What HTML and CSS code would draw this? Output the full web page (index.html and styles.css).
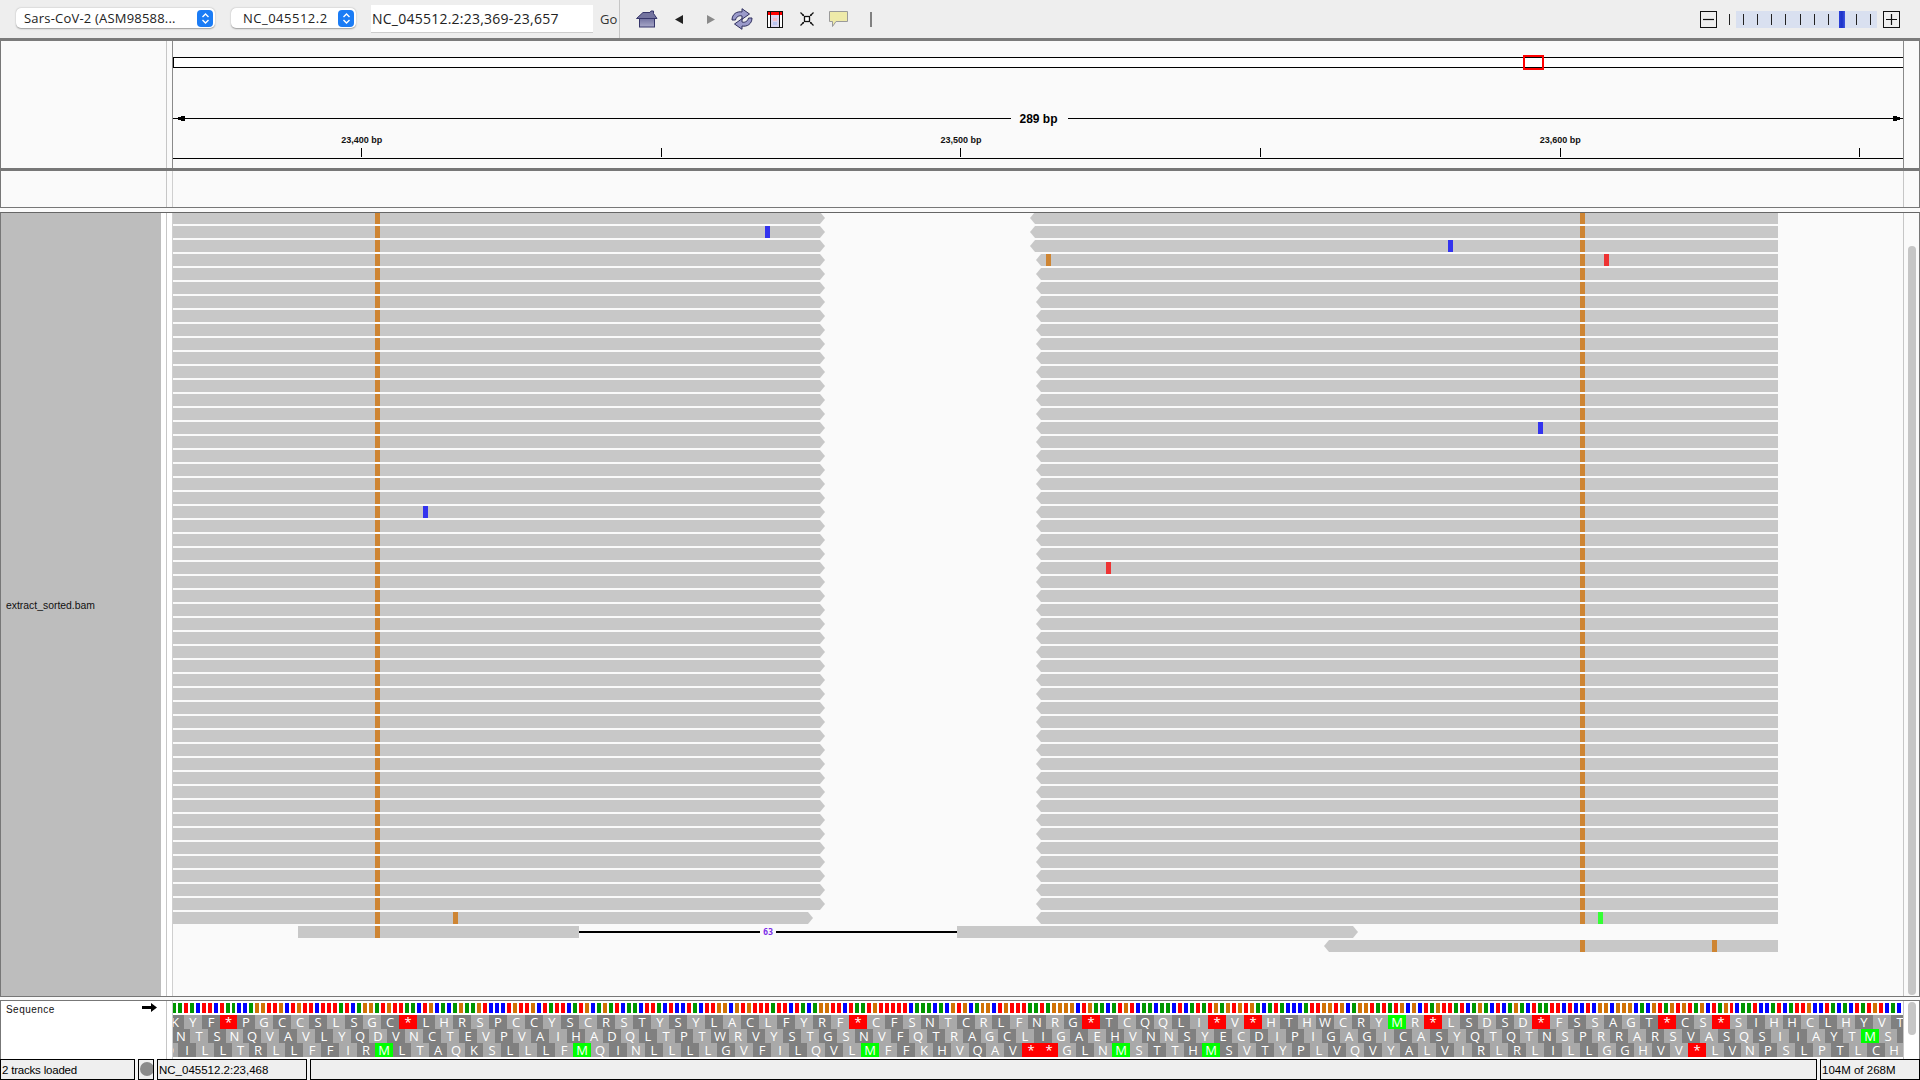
FILE: index.html
```html
<!DOCTYPE html>
<html lang="en">
<head>
<meta charset="utf-8">
<title>IGV</title>
<link rel="stylesheet" href="styles.css">
</head>
<body>
<header class="toolbar">
  <div class="select genome"><span class="select-text">Sars-CoV-2 (ASM98588...</span><span class="stepper"><svg width="9" height="13" viewBox="0 0 9 13"><path d="M1.5 5 4.5 2 7.5 5M1.5 8 4.5 11 7.5 8" fill="none" stroke="#fff" stroke-width="1.4"/></svg></span></div>
  <div class="select chrom"><span class="select-text">NC_045512.2</span><span class="stepper"><svg width="9" height="13" viewBox="0 0 9 13"><path d="M1.5 5 4.5 2 7.5 5M1.5 8 4.5 11 7.5 8" fill="none" stroke="#fff" stroke-width="1.4"/></svg></span></div>
  <div class="locus">NC_045512.2:23,369-23,657</div>
  <div class="go">Go</div>
  <div class="tools">
    <svg class="ic-home" width="22" height="18" viewBox="0 0 22 18"><defs><linearGradient id="hg" x1="0" y1="0" x2="0" y2="1"><stop offset="0" stop-color="#6f6f9e"/><stop offset="1" stop-color="#a9a9c9"/></linearGradient></defs><rect x="3.5" y="8" width="15" height="9" fill="url(#hg)" stroke="#35356a"/><path d="M.5 8.5 7 2.5H14L15 1H17.5V3.5L21 8.5Z" fill="#73739f" stroke="#35356a"/></svg>
    <svg class="ic-back" width="8" height="9" viewBox="0 0 8 9"><path d="M8 0V9L0 4.5Z" fill="#222"/></svg>
    <svg class="ic-fwd" width="8" height="9" viewBox="0 0 8 9"><path d="M0 0V9L8 4.5Z" fill="#8a8a8a"/></svg>
    <svg class="ic-refresh" width="22" height="22" viewBox="0 0 22 22"><path d="M1 12C1 6 6 3 11 4V.7L18.5 6 11 11.3V8C8 7 5 9 4.5 12Z" fill="#9a9aca" stroke="#2f2f5e"/><path d="M21 10C21 16 16 19 11 18V21.3L3.5 16 11 10.7V14C14 15 17 13 17.5 10Z" fill="#9a9aca" stroke="#2f2f5e"/></svg>
    <svg class="ic-region" width="16" height="17" viewBox="0 0 16 17"><rect x=".5" y=".5" width="15" height="16" fill="#fff" stroke="#111"/><rect x="1" y="1" width="14" height="3" fill="#f00"/><rect x="4" y="4" width="8" height="12" fill="#d9d5ef"/><rect x="6" y="7" width="4" height="3" fill="#f4bcc6"/><rect x="6" y="11" width="4" height="3" fill="#b9c4ee"/><path d="M3.5 1V16M12.5 1V16" stroke="#111"/></svg>
    <svg class="ic-fit" width="14" height="14" viewBox="0 0 14 14"><rect x="4.5" y="4.5" width="5" height="5" fill="#fff" stroke="#111" stroke-width="1.3"/><path d="M.5.5 3.5 3.5M13.5.5 10.5 3.5M.5 13.5 3.5 10.5M13.5 13.5 10.5 10.5" stroke="#111" stroke-width="1.2"/><path d="M2 4H4V2ZM12 4H10V2ZM2 10H4V12ZM12 10H10V12Z" fill="#111"/></svg>
    <svg class="ic-note" width="19" height="16" viewBox="0 0 19 16"><path d="M.5.5H18.5V10.5H7L3.5 15.5V10.5H.5Z" fill="#eeeaa9" stroke="#9a9a9a"/></svg>
    <span class="tool-sep"></span>
  </div>
  <div class="zoom">
    <span class="zoom-btn"><svg width="15" height="15" viewBox="0 0 15 15"><path d="M2 7.5H13" stroke="#111" stroke-width="1.2"/></svg></span>
    <span class="zoom-first"></span>
    <div class="zoom-track">
      <i></i><i></i><i></i><i class="wide"></i><i></i><i></i><i></i><b></b><i></i><i></i>
    </div>
    <span class="zoom-btn"><svg width="15" height="15" viewBox="0 0 15 15"><path d="M2 7.5H13M7.5 2V13" stroke="#111" stroke-width="1.2"/></svg></span>
  </div>
</header>

<section class="panel overview">
  <div class="name"></div>
  <div class="gutter"></div>
  <div class="canvas">
    <div class="chromo"><span class="locator"></span></div>
    <div class="span">
      <span class="span-line stub-l"></span>
      <svg class="head" width="7" height="5" viewBox="0 0 7 5"><path d="M0 1H3V0H7V5H3V4H0Z" fill="#000"/></svg>
      <span class="span-line"></span>
      <span class="span-label">289 bp</span>
      <span class="span-line"></span>
      <svg class="head" width="7" height="5" viewBox="0 0 7 5"><path d="M7 1H4V0H0V5H4V4H7Z" fill="#000"/></svg>
      <span class="span-line stub-r"></span>
    </div>
    <div class="ticks">
      <div class="tick"><span>23,400 bp</span></div>
      <div class="tick"></div>
      <div class="tick"><span>23,500 bp</span></div>
      <div class="tick"></div>
      <div class="tick"><span>23,600 bp</span></div>
      <div class="tick"></div>
    </div>
  </div>
  <div class="strip"></div>
</section>

<section class="panel features">
  <div class="name"></div>
  <div class="gutter"></div>
  <div class="canvas soft"></div>
  <div class="strip"></div>
</section>

<section class="panel main">
  <div class="name"><div class="bam">extract_sorted.bam</div></div>
  <div class="gutter"></div>
  <div class="canvas soft"><div class="reads" id="reads"></div></div>
  <div class="strip"><span class="thumb main-thumb"></span></div>
</section>

<section class="panel sequence">
  <div class="name seq-name"><span>Sequence</span><svg width="15" height="9" viewBox="0 0 15 9"><path d="M0 3H9V0L15 4.5 9 9V6H0Z" fill="#000"/></svg></div>
  <div class="gutter"></div>
  <div class="canvas soft seq-canvas"><div class="bases" id="bases"></div><div class="frames" id="frames"></div></div>
  <div class="strip"><span class="thumb seq-thumb"></span></div>
</section>

<footer class="status">
  <div class="box b1">2 tracks loaded</div>
  <div class="box b2"><span class="dot"></span></div>
  <div class="box b3">NC_045512.2:23,468</div>
  <div class="box b4"></div>
  <div class="box b5">104M of 268M</div>
</footer>
<script src="app.js"></script>
</body>
</html>
```
FILE: styles.css
```css
* { box-sizing: border-box; }
:root { --genome: repeat(10, 6px) 5px repeat(124, 6px) 5px repeat(124, 6px) 5px repeat(28, 6px); }
html, body { margin: 0; padding: 0; }
body { width: 1920px; height: 1080px; overflow: hidden; background: #fafafa; font-family: "Liberation Sans", sans-serif; color: #000; }

.toolbar { height: 41px; background: #eeeeee; border-bottom: 3px solid #7b7b7b; display: flex; align-items: center; padding-left: 16px; }
.select { height: 20px; margin-top: -2px; background: #fff; border-radius: 5px; box-shadow: 0 0.5px 1.5px rgba(0,0,0,.35); display: flex; align-items: center; justify-content: space-between; padding-right: 2px; font: 13px "Open Sans", sans-serif; color: #222; }
.genome { width: 199px; padding-left: 8px; }
.chrom { width: 125px; margin-left: 16px; padding-left: 12px; }
.select-text { white-space: nowrap; letter-spacing: .2px; }
.chrom .select-text { letter-spacing: .5px; }
.stepper { width: 16px; height: 17px; border-radius: 4px; background: #1b7cf5; display: flex; align-items: center; justify-content: center; }
.locus { width: 222px; height: 28px; margin-left: 15px; background: #fff; border-bottom: 1px solid #ccc; font: 14px/27px "Open Sans", sans-serif; letter-spacing: .24px; padding-left: 1px; color: #222; white-space: nowrap; }
.go { width: 27px; height: 38px; padding-left: 7px; border-right: 1px solid #c6c6c6; font: 13px/39px "Open Sans", sans-serif; color: #333; }
.tools { display: flex; align-items: center; height: 38px; padding-left: 16px; }
.ic-back { margin-left: 17px; }
.ic-fwd { margin-left: 24px; }
.ic-refresh { margin-left: 16px; }
.ic-region { margin-left: 14px; }
.ic-fit { margin-left: 17px; }
.ic-note { margin-left: 15px; }
.tool-sep { width: 2px; height: 15px; margin-left: 22px; background: #808080; }
.zoom { margin-left: auto; padding-right: 20px; display: flex; align-items: center; height: 38px; }
.zoom-btn { width: 17px; height: 17px; border: 1px solid #111; background: #efefef; display: flex; align-items: center; justify-content: center; }
.zoom-first { width: 1px; height: 11px; margin-left: 12px; background: #222; }
.zoom-track { width: 141px; height: 17px; margin-left: 6px; margin-right: 6px; background: #d9e0f0; display: flex; align-items: center; padding-left: 7px; }
.zoom-track i { width: 1px; height: 11px; background: #222; margin-right: 13px; flex: none; }
.zoom-track i.wide { margin-right: 14px; }
.zoom-track b { width: 6px; height: 17px; background: linear-gradient(90deg, #2a3fd8, #1c33c8 50%, #3f55e0); margin-left: -3px; margin-right: 11px; flex: none; }

.panel { display: flex; border-left: 1px solid #777; border-right: 1px solid #777; }
.name { width: 165px; flex: none; background: #fafafa; }
.gutter { width: 6px; flex: none; border-left: 1px solid #c6c6c6; background: #fafafa; }
.canvas { width: 1732px; flex: none; border-left: 1px solid #8a8a8a; border-right: 1px solid #8a8a8a; overflow: hidden; }
.canvas.soft { border-left-color: #cfcfcf; border-right-color: #c6c6c6; }
.strip { flex: 1; min-width: 0; padding-left: 3px; }

.overview { height: 130px; border-bottom: 3px solid #777; }
.chromo { position: relative; height: 11px; margin-top: 16px; background: #fff; border: 1px solid #000; border-width: 1px 0; border-left: 1px solid #000; }
.locator { position: absolute; left: 1349px; top: -3px; width: 21px; height: 15px; border: 2px solid #f00; }
.span { display: flex; align-items: center; height: 5px; margin-top: 48px; }
.span-line { flex: 1; height: 1px; background: #000; }
.span-line.stub-l { flex: none; width: 5px; }
.span-line.stub-r { flex: none; width: 3px; }
.head { flex: none; }
.span-label { flex: none; padding: 0 10px 0 9px; font: bold 12px/12px "Liberation Sans", sans-serif; }
.ticks { display: flex; gap: 299.6px; padding-left: 188.8px; margin-top: 14px; border-bottom: 1px solid #000; height: 24px; }
.tick { width: 0; height: 23px; display: flex; flex-direction: column; align-items: center; justify-content: flex-end; }
.tick::after { content: ""; flex: none; width: 1px; height: 9px; margin-bottom: 1px; background: #000; }
.tick span { flex: none; white-space: nowrap; font: bold 9px/10px "Liberation Sans", sans-serif; margin-bottom: 3px; color: #111; }

.features { height: 37px; border-bottom: 1px solid #777; }
.main { margin-top: 4px; height: 785px; border-top: 1px solid #666; border-bottom: 1px solid #777; }
.main .name { padding-right: 5px; background: #fff; }
.main .gutter { background: #fff; }
.bam { height: 100%; background: #bdbdbd; display: flex; align-items: center; padding: 2px 0 0 5px; font-size: 10.4px; color: #111; }
.reads { display: flex; flex-direction: column; gap: 2px; margin: -1px 0 0 -1px; }
.row { display: grid; grid-template-columns: var(--genome); grid-template-rows: 12px; height: 12px; }
.row > * { grid-row: 1; }
.read { background: #c8c8c8; }
.read.flat { margin-left: 1px; }
.read.to-r { clip-path: polygon(0 0, calc(100% - 5px) 0, 100% 50%, calc(100% - 5px) 100%, 0 100%); }
.read.to-l { clip-path: polygon(5px 0, 100% 0, 100% 100%, 5px 100%, 0 50%); margin-left: 2px; margin-right: -1px; }
.mm { width: 5px; position: relative; z-index: 1; }
.mm.G { background: #ce8533; }
.mm.C { background: #3333ee; }
.mm.T { background: #ee3333; }
.mm.A { background: #33ff33; }
.gap { display: flex; align-items: center; }
.gap::before, .gap::after { content: ""; flex: 1; height: 2px; background: #000; }
.gap span { flex: none; width: 16px; height: 12px; text-align: center; background: #fafafa; font: bold 8.5px/12px "DejaVu Sans Mono", monospace; color: #7a2be8; }

.thumb { display: block; width: 8px; border-radius: 4px; background: #c6c6c6; margin-left: 1px; }
.main-thumb { margin-top: 33px; height: 749px; }
.seq-thumb { margin-top: 1px; height: 33px; }

.sequence { margin-top: 3px; height: 59px; border-top: 1px solid #777; background: #fff; }
.sequence .name, .sequence .gutter { background: #fff; }
.seq-canvas { background: #fff; }
.seq-name { display: flex; justify-content: space-between; padding: 3px 9px 0 5px; align-items: flex-start; font-size: 10px; letter-spacing: .45px; color: #111; }
.seq-name svg { margin-top: -1px; }
.bases { display: grid; grid-template-columns: var(--genome); height: 10px; margin: 2px 0 2px -1px; }
.bases i { margin-right: 2px; }
.bases .A { background: #009600; }
.bases .C { background: #0000ff; }
.bases .G { background: #d17105; }
.bases .T { background: #ff0000; }
.frames { margin-left: -1px; }
.frame { display: grid; grid-template-columns: var(--genome); height: 14px; }
.aa { text-align: center; font: 13px/14px "Open Sans", sans-serif; color: #fff; white-space: nowrap; }
.aa.d { background: #808080; }
.aa.l { background: #a9a9a9; }
.aa.M { background: #00ff00; }
.aa.X { background: #ff0000; }
.aa.cut1 { margin-left: -6px; }
.aa.cut2 { margin-left: -12px; }
.aa.tail1 { margin-right: -12px; }
.aa.tail2 { margin-right: -6px; }

.status { height: 21px; display: flex; background: #f4f4f4; }
.box { height: 21px; flex: none; border: 1px solid #000; background: #efefef; font-size: 11.5px; line-height: 20px; padding-left: 1px; white-space: nowrap; overflow: hidden; }
.b1 { width: 135px; letter-spacing: -.2px; }
.b2 { width: 16px; margin-left: 3px; padding: 2px 0 0 1px; }
.b3 { width: 150px; margin-left: 3px; }
.b4 { width: 1507px; margin-left: 3px; }
.b5 { width: 100px; margin-left: 3px; }
.dot { display: block; width: 14px; height: 14px; border-radius: 50%; background: #8b8b8b; }
```
FILE: app.js
```js
var READ_ROWS = [];
var leftEnd, rightStart;
for (var r = 0; r < 51; r++) {
  leftEnd = r === 50 ? 107 : 109;
  rightStart = r < 3 ? 143 : 144;
  READ_ROWS.push([[0, leftEnd, "to-r"], [rightStart, 268, "to-l"]]);
}
READ_ROWS.push([[21, 68, "flat"], [131, 198, "to-r"]]);
READ_ROWS.push([[192, 268, "to-l"]]);

var MISMATCH = [
  [1, 99, "C"], [2, 213, "C"], [3, 146, "G"], [3, 239, "T"], [15, 228, "C"],
  [21, 42, "C"], [25, 156, "T"], [50, 47, "G"], [50, 238, "A"], [52, 257, "G"]
];
var i;
for (i = 0; i < 52; i++) MISMATCH.push([i, 34, "G"]);
for (i = 0; i < 51; i++) MISMATCH.push([i, 235, "G"]);
MISMATCH.push([52, 235, "G"]);

var readsEl = document.getElementById("reads");
READ_ROWS.forEach(function (reads, idx) {
  var row = document.createElement("div");
  row.className = "row";
  reads.forEach(function (rd) {
    var d = document.createElement("div");
    d.className = "read " + rd[2];
    d.style.gridColumn = (rd[0] + 1) + " / " + (rd[1] + 1);
    row.appendChild(d);
  });
  if (idx === 51) {
    var g = document.createElement("div");
    g.className = "gap";
    g.style.gridColumn = "69 / 132";
    g.innerHTML = "<span>63</span>";
    row.appendChild(g);
  }
  MISMATCH.forEach(function (m) {
    if (m[0] !== idx) return;
    var d = document.createElement("div");
    d.className = "mm " + m[2];
    d.style.gridColumn = String(m[1] + 1);
    row.appendChild(d);
  });
  readsEl.appendChild(row);
});

var DNA = "AATACTTCTAACCAGGTTGCTGTTCTTTAT" +
  "CAGGATGTTAACTGCACAGAAGTCCCTGTT" +
  "GCTATTCATGCAGATCAACTTACTCCTACT" +
  "TGGCGTGTTTATTCTACAGGTTCTAATGTT" +
  "TTTCAAACACGTGCAGGCTGTTTAATAGGG" +
  "GCTGAACATGTCAACAACTCATATGAGTGT" +
  "GACATACCCATTGGTGCAGGTATATGCGCT" +
  "AGTTATCAGACTCAGACTAATTCTCCTCGG" +
  "CGGGCACGTAGTGTAGCTAGTCAATCCATC" +
  "ATTGCCTACACTATGTCAC";
var basesEl = document.getElementById("bases");
DNA.split("").forEach(function (b) {
  var d = document.createElement("i");
  d.className = b;
  basesEl.appendChild(d);
});

var FRAMES = [
  { aa: "KYF*PGCCSLSGC*LHRSPCCYSCRSTYSYLACLFYRF*CFSNTCRLFNRG*TCQQLI*V*HTHWCRYMR*LSDSD*FSSAGT*CS*SIHHCLHYVT", first: 2, cut: "cut1", darkParity: 0 },
  { aa: "NTSNQVAVLYQDVNCTEVPVAIHADQLTPTWRVYSTGSNVFQTRAGCLIGAEHVNNSYECDIPIGAGICASYQTQTNSPRRARSVASQSIIAYTMSL", first: 3, cut: "", darkParity: 0 },
  { aa: "QILLTRLLFFIRMLTAQKSLLLFMQINLLLLGVFILQVLMFFKHVQAV**GLNMSTTHMSVTYPLVQVYALVIRLRLILLGGHVV*LVNPSLPTLCH", first: 1, cut: "cut2", darkParity: 1 }
];
var framesEl = document.getElementById("frames");
FRAMES.forEach(function (f) {
  var line = document.createElement("div");
  line.className = "frame";
  f.aa.split("").forEach(function (ch, n) {
    var c = document.createElement("span");
    var span = (n === 0) ? f.first : 3;
    var cls = "aa " + (n % 2 === f.darkParity ? "d" : "l");
    if (n === 0 && f.cut) cls += " " + f.cut;
    if (ch === "M") cls += " M";
    if (ch === "*") cls += " X";
    if (n === f.aa.length - 1 && f !== FRAMES[2]) {
      span = (f === FRAMES[0]) ? 2 : 1;
      cls += f === FRAMES[0] ? " tail2" : " tail1";
    }
    c.className = cls;
    c.style.gridColumn = "span " + span;
    c.textContent = ch;
    line.appendChild(c);
  });
  framesEl.appendChild(line);
});
```
